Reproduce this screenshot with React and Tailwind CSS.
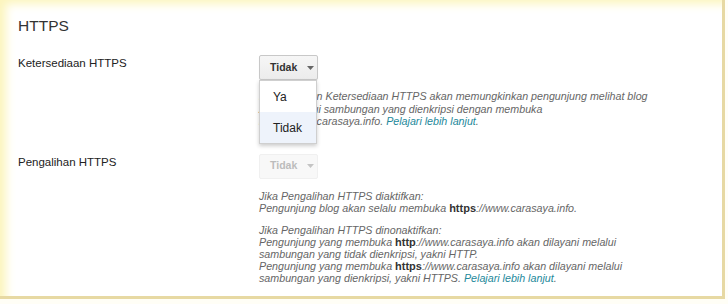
import React from "react";

function Caret({ color }) {
  return (
    <svg width="7" height="4" viewBox="0 0 7 4" className="ml-[10px]">
      <path d="M0 0 L7 0 L3.5 4 Z" fill={color} />
    </svg>
  );
}

function Bold({ children }) {
  return <span className="font-bold not-italic text-[11px] text-[#333]">{children}</span>;
}

function Link({ children }) {
  return <span className="text-[#23899b]">{children}</span>;
}

export default function App() {
  return (
    <div className="w-[728px] h-[304px] bg-[#fffef6] overflow-hidden" style={{ fontFamily: '"Liberation Sans", Arial, sans-serif' }}>
      <div className="w-[725px] h-[299px] bg-white border-r-[3px] border-b-[3px] border-[#e7d9a3] shadow-[inset_9px_7px_10px_-3px_#fcf5bd] pl-[18px] pt-[14px]">
        <h2 className="text-[15.5px] leading-[24px] text-[#333]">HTTPS</h2>

        <div className="flex mt-[17px]">
          <div className="w-[241px] text-[11.5px] leading-[15px] text-[#222] pt-[1px]">Ketersediaan HTTPS</div>
          <div className="relative">
            <div className="flex items-center w-[59px] h-[25px] pl-[10px] rounded-[2px] border border-[#c8c8c8] bg-gradient-to-b from-[#f6f6f6] to-[#ececec] shadow-[0_1px_1px_rgba(0,0,0,0.08)] text-[10.5px] font-bold text-[#333]">
              Tidak
              <Caret color="#666" />
            </div>
            <div className="absolute left-0 top-[25px] z-10 w-[58px] bg-white border border-[#cfcfcf] shadow-[0_2px_4px_rgba(0,0,0,0.2)] text-[12px] text-[#222]">
              <div className="h-[31px] flex items-center pl-[13px]">Ya</div>
              <div className="h-[31px] flex items-center pl-[13px] bg-[#eef3fb]">Tidak</div>
            </div>
            <p className="mt-[10px] text-[10.7px] leading-[12.5px] italic text-[#666] whitespace-nowrap">
              Mengaktifkan Ketersediaan HTTPS akan memungkinkan pengunjung melihat blog
              <br />
              Anda melalui sambungan yang dienkripsi dengan membuka
              <br />
              https://www.carasaya.info. <Link>Pelajari lebih lanjut</Link>.
            </p>
          </div>
        </div>

        <div className="flex mt-[26px]">
          <div className="w-[241px] text-[11.5px] leading-[15px] text-[#222] pt-[1px]">Pengalihan HTTPS</div>
          <div>
            <div className="flex items-center w-[59px] h-[25px] pl-[10px] rounded-[2px] border border-[#f0f0f0] bg-[#f8f8f8] text-[10.5px] font-bold text-[#bcbcbc]">
              Tidak
              <Caret color="#c4c4c4" />
            </div>
            <p className="mt-[11px] text-[10.7px] leading-[12.5px] italic text-[#666] whitespace-nowrap">
              Jika Pengalihan HTTPS diaktifkan:
              <br />
              Pengunjung blog akan selalu membuka <Bold>https</Bold>://www.carasaya.info.
            </p>
            <p className="mt-[9px] text-[10.7px] leading-[12.2px] italic text-[#666] whitespace-nowrap">
              Jika Pengalihan HTTPS dinonaktifkan:
              <br />
              Pengunjung yang membuka <Bold>http</Bold>://www.carasaya.info akan dilayani melalui
              <br />
              sambungan yang tidak dienkripsi, yakni HTTP.
              <br />
              Pengunjung yang membuka <Bold>https</Bold>://www.carasaya.info akan dilayani melalui
              <br />
              sambungan yang dienkripsi, yakni HTTPS. <Link>Pelajari lebih lanjut</Link>.
            </p>
          </div>
        </div>
      </div>
    </div>
  );
}
